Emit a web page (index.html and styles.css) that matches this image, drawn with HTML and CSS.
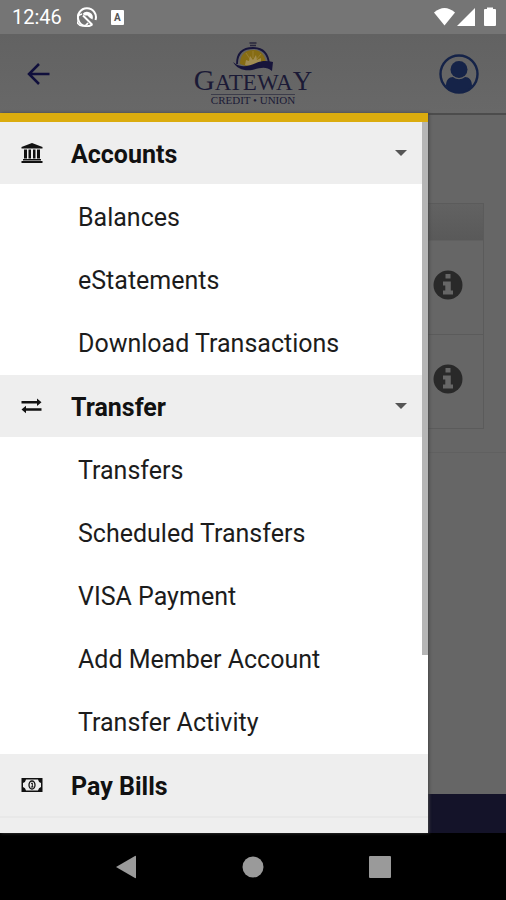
FILE: index.html
```html
<!DOCTYPE html>
<html lang="en">
<head>
<meta charset="utf-8">
<meta name="viewport" content="width=device-width, initial-scale=1">
<title>Gateway Credit Union</title>
<link rel="stylesheet" href="styles.css">
</head>
<body>

<div class="statusbar">
  <span class="clock">12:46</span>
  <svg class="status-round" viewBox="0 0 20 20" aria-hidden="true">
    <path d="M15.500 17.300A9 9 0 1 1 18.500 13" fill="none" stroke="#fff" stroke-width="2"/>
    <path d="M5 7A6 6 0 1 0 11 15.800" fill="none" stroke="#fff" stroke-width="1.600"/>
    <path d="M5.500 7A5.800 5.800 0 0 1 15.500 12.500L13 11L10.500 8.500L8 8.500Z" fill="#fff"/>
    <path d="M6 8.500L15 17.500" stroke="#fff" stroke-width="2"/>
  </svg>
  <span class="status-a">A</span>
  <svg class="status-right" viewBox="0 0 62 20" aria-hidden="true">
    <path d="M0 5.500Q10.500-3.500 21 5.500L10.500 18.500Z" fill="#fff"/>
    <path d="M41 1V19H23Z" fill="#fff"/>
    <path d="M53 2V0.500H59V2H61Q62 2 62 3V18Q62 19 61 19H51Q50 19 50 18V3Q50 2 51 2Z" fill="#fff"/>
  </svg>
</div>

<header class="header">
  <button class="icon-button" aria-label="Back">
    <svg width="24" height="24" viewBox="0 0 24 24"><path d="M22.500 12H2.500M12 2L2 12L12 22" fill="none" stroke="#100f3c" stroke-width="2.500"/></svg>
  </button>
  <div class="logo">
    <svg class="logo-dome" viewBox="0 0 42 30" aria-hidden="true">
      <path d="M17.500 1H24.500M18 3.500H24" stroke="#29273c" stroke-width="1.500"/>
      <path d="M5 22C5 10 12 6 21 6S36 11 37 22" fill="none" stroke="#17153b" stroke-width="1.800"/>
      <path d="M8 22C8 12 14 8 21 8S33 12 34 21L22 22L14 24Z" fill="#866c14"/>
      <path d="M13 23L14 18L17 19L18 14L21 18L24 13L25 18L29 16L29 21L20 24Z" fill="#a18c52"/>
      <path d="M21 9V16M14 11L18 17M29 12L24 18" stroke="#a2883f" stroke-width="0.700"/>
      <path d="M1 20C9 27 17 24 24 21C31 18 36 19 41 20L40 29C34 24 28 26 20 28C12 29 5 27 1 20Z" fill="#17153b"/>
    </svg>
    <div class="logo-name"><span class="logo-cap">G</span>ATEWA<span class="logo-y">Y</span></div>
    <div class="logo-sub">CREDIT • UNION</div>
  </div>
  <button class="icon-button profile" aria-label="Profile">
    <svg width="40" height="40" viewBox="0 0 40 40">
      <circle cx="20" cy="20" r="18.500" fill="none" stroke="#152348" stroke-width="2.400"/>
      <circle cx="20" cy="15.500" r="8.500" fill="#152348"/>
      <path d="M7 32C7 26 10 23 14 23C18 26 22 26 26 23C30 23 33 26 33 32C25 41 15 41 7 32Z" fill="#152348"/>
    </svg>
  </button>
</header>

<main class="main">
  <div class="page">
    <div class="card">
      <div class="card-head"></div>
      <div class="card-row">
        <button class="icon-button" aria-label="Information">
          <svg width="30" height="30" viewBox="0 0 30 30"><circle cx="15" cy="15" r="14.500" fill="#292929"/><path d="M12.500 4H17.500V8.500H12.500ZM10 11.500H17.800V20.500H20V24.500H10V20.500H12.300V15.500H10Z" fill="#666"/></svg>
        </button>
      </div>
      <div class="card-row">
        <button class="icon-button" aria-label="Information">
          <svg width="30" height="30" viewBox="0 0 30 30"><circle cx="15" cy="15" r="14.500" fill="#292929"/><path d="M12.500 4H17.500V8.500H12.500ZM10 11.500H17.800V20.500H20V24.500H10V20.500H12.300V15.500H10Z" fill="#666"/></svg>
        </button>
      </div>
    </div>
    <div class="page-rest"></div>
    <div class="page-footer"></div>
  </div>

  <nav class="drawer">
    <button class="section" aria-expanded="true">
      <svg class="section-icon" viewBox="0 0 22 20" aria-hidden="true">
        <path d="M11 0L21.500 4V5.500H0.500V4ZM3 6.500H6V15.500H3ZM7.500 6.500H10V15.500H7.500ZM12 6.500H14.500V15.500H12ZM16 6.500H19V15.500H16ZM2 16H20V17.500H2ZM0.500 18H21.500V20H0.500Z" fill="#111"/>
      </svg>
      <span class="section-name">Accounts</span>
      <span class="caret"></span>
    </button>
    <ul class="items">
      <li><a href="#balances">Balances</a></li>
      <li><a href="#estatements">eStatements</a></li>
      <li><a href="#download">Download Transactions</a></li>
    </ul>
    <button class="section" aria-expanded="true">
      <svg class="section-icon" viewBox="0 0 22 20" aria-hidden="true">
        <path d="M0.500 5H16V2.500L20.500 6.200L16 10V7.500H0.500ZM20.500 12.200H5V9.800L0.500 13.500L5 17.200V14.700H20.500Z" fill="#111"/>
      </svg>
      <span class="section-name">Transfer</span>
      <span class="caret"></span>
    </button>
    <ul class="items">
      <li><a href="#transfers">Transfers</a></li>
      <li><a href="#scheduled">Scheduled Transfers</a></li>
      <li><a href="#visa">VISA Payment</a></li>
      <li><a href="#member">Add Member Account</a></li>
      <li><a href="#activity">Transfer Activity</a></li>
    </ul>
    <button class="section">
      <svg class="section-icon" viewBox="0 0 22 20" aria-hidden="true">
        <path d="M0.500 3H21.500V17H0.500ZM5 4.500Q4.500 7.500 2 8V12Q4.500 12.500 5 15.500H17Q17.500 12.500 20 12V8Q17.500 7.500 17 4.500Z" fill="#111" fill-rule="evenodd"/>
        <ellipse cx="11" cy="10" rx="3" ry="4" fill="none" stroke="#111" stroke-width="1.300"/>
        <path d="M10 8.500L11.300 8V12M9.800 12H12.500" fill="none" stroke="#111"/>
      </svg>
      <span class="section-name">Pay Bills</span>
    </button>
    <div class="section-next"></div>
    <div class="scrollbar"></div>
  </nav>
</main>

<div class="navbar">
  <button class="icon-button" aria-label="Back">
    <svg width="22" height="24" viewBox="0 0 22 24"><path d="M1 12L20 1Q21 0.500 21 1.500V22.500Q21 23.500 20 23Z" fill="#9a9a9a"/></svg>
  </button>
  <button class="icon-button" aria-label="Home">
    <svg width="22" height="22" viewBox="0 0 22 22"><circle cx="11" cy="11" r="10.500" fill="#9a9a9a"/></svg>
  </button>
  <button class="icon-button" aria-label="Recent apps">
    <svg width="22" height="22" viewBox="0 0 22 22"><rect width="22" height="22" rx="1" fill="#9a9a9a"/></svg>
  </button>
</div>

</body>
</html>
```
FILE: styles.css
```css
* {
  box-sizing: border-box;
}

body {
  display: flex;
  flex-direction: column;
  min-height: 100vh;
  margin: 0;
  background: #666;
  color: #111;
  font-family: Roboto, sans-serif;
}

button {
  border: 0;
  font: inherit;
  color: inherit;
  text-align: left;
}

.icon-button {
  display: flex;
  padding: 0;
  background: none;
}

/* android status bar */
.statusbar {
  display: flex;
  align-items: center;
  height: 34px;
  padding: 0 10px 0 12px;
  background: #757575;
  color: #fff;
}

.clock {
  font-size: 20px;
}

.status-round {
  width: 20px;
  height: 20px;
  margin-left: 15px;
}

.status-a {
  width: 13px;
  margin-left: 14px;
  border-radius: 1px;
  background: #fff;
  color: #555;
  font-size: 10px;
  font-weight: bold;
  line-height: 15px;
  text-align: center;
}

.status-right {
  width: 62px;
  height: 20px;
  margin-left: auto;
}

/* app header */
.header {
  display: grid;
  grid-template-columns: 1fr auto 1fr;
  align-items: center;
  height: 79px;
  padding: 0 27px;
  background: linear-gradient(#626262, #686868);
}

.profile {
  justify-self: end;
}

.logo {
  display: flex;
  flex-direction: column;
  align-items: center;
  color: #1b1a36;
  font-family: "Liberation Serif", serif;
}

.logo-dome {
  width: 42px;
  height: 30px;
}

.logo-name {
  margin-top: -3px;
  font-size: 23px;
  line-height: 22px;
}

.logo-cap {
  font-size: 29px;
}

.logo-y {
  font-size: 27px;
}

.logo-sub {
  border-top: 1px solid #3c3c4a;
  font-size: 11px;
  line-height: 10px;
}

/* page behind the drawer */
.main {
  position: relative;
  display: flex;
  flex: 1;
}

.page {
  display: flex;
  flex: 1;
  flex-direction: column;
  border-top: 2px solid #4c4c4c;
}

.card {
  margin: 88px 22px 23px;
  border: 1px solid #5b5b5b;
}

.card-head {
  height: 36px;
  background: linear-gradient(#626262, #595959);
}

.card-row {
  display: flex;
  align-items: center;
  justify-content: flex-end;
  height: 94px;
  padding: 0 20px 6px 0;
  border-top: 1px solid #606060;
}

.card-row + .card-row {
  border-color: #5b5b5b;
}

.page-rest {
  flex: 1;
  border-top: 1px solid #606060;
}

.page-footer {
  height: 39px;
  background: #141329;
}

/* menu drawer */
.drawer {
  position: absolute;
  top: 0;
  bottom: 0;
  left: 0;
  display: flex;
  flex-direction: column;
  width: calc(100% - 78px);
  border-top: 9px solid #dbac0e;
  background: #fff;
  box-shadow: 1px 0 3px #444;
}

.section {
  display: flex;
  align-items: center;
  height: 62px;
  padding: 0 21px;
  background: #eee;
}

.section-icon {
  width: 22px;
  height: 20px;
}

.section-name {
  flex: 1;
  margin-left: 28px;
  padding-top: 2px;
  font-size: 25px;
  font-weight: bold;
}

.caret {
  border: 6px solid transparent;
  border-top-color: #555;
  border-bottom: 0;
}

.items {
  margin: 0;
  padding-top: 2px;
  padding-left: 0;
  list-style: none;
}

.items a {
  display: block;
  padding-left: 78px;
  color: #1c1c1c;
  font-size: 25px;
  line-height: 63px;
  text-decoration: none;
}

.section-next {
  flex: 1;
  border-top: 2px solid #e8e8e8;
  background: #eee;
}

.scrollbar {
  position: absolute;
  top: 0;
  right: 0;
  width: 6px;
  height: 75%;
  background: #b5b5b5;
}

/* android navigation bar */
.navbar {
  display: flex;
  align-items: center;
  justify-content: center;
  gap: 105px;
  height: 67px;
  background: #000;
}
```
